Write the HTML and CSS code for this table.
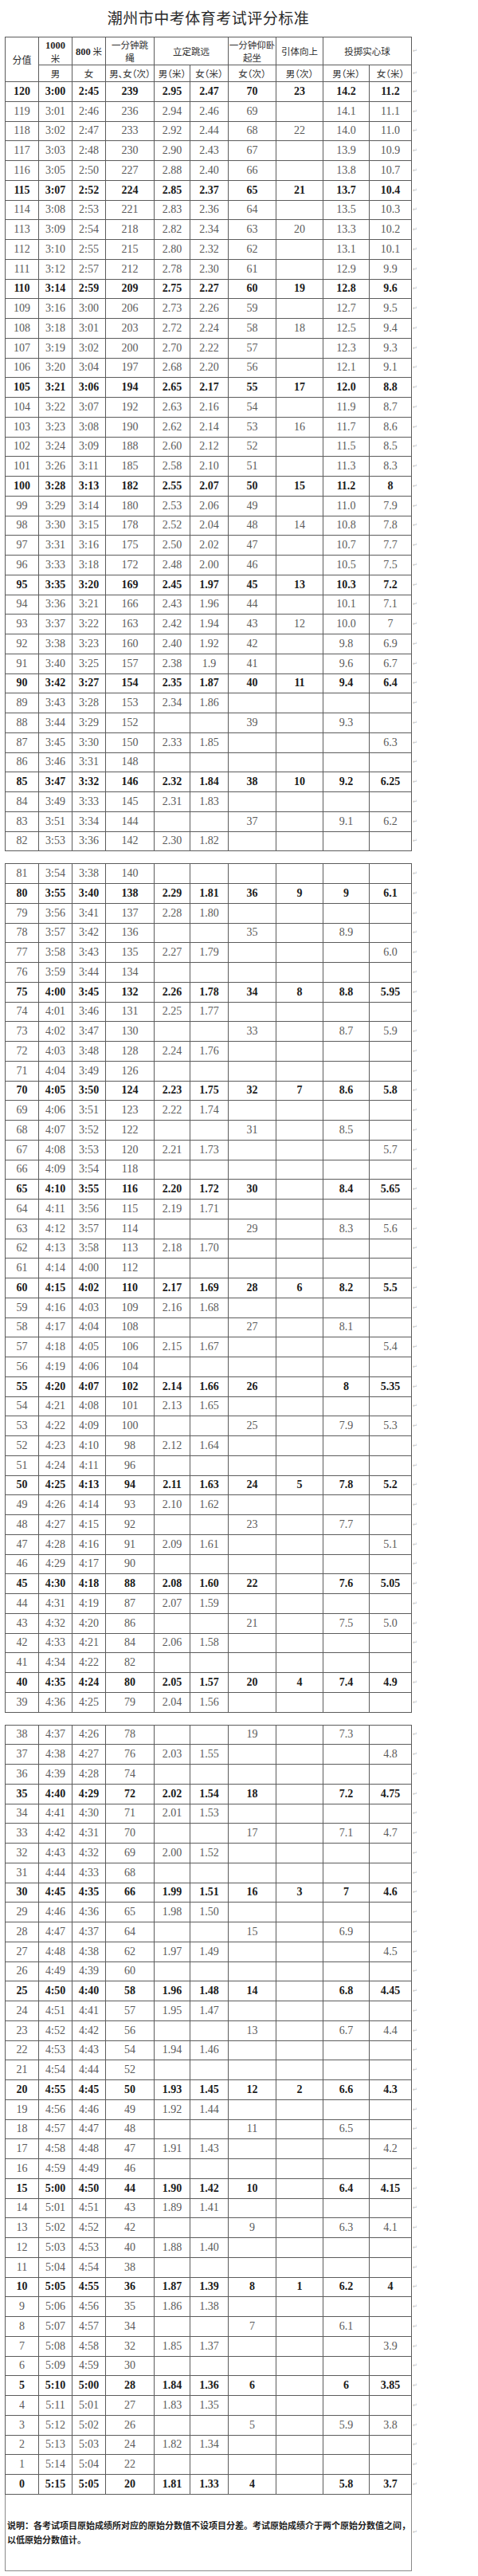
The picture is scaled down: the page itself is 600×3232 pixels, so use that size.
FILE: index.html
```html
<!DOCTYPE html>
<html lang="zh">
<head>
<meta charset="utf-8">
<title>潮州市中考体育考试评分标准</title>
<link rel="stylesheet" href="styles.css">
</head>
<body>
<div class="page">
<h1 class="title">潮州市中考体育考试评分标准</h1>
<table class="grid">
<colgroup><col class="c1"><col class="c2"><col class="c3"><col class="c4"><col class="c5"><col class="c6"><col class="c7"><col class="c8"><col class="c9"><col class="c10"><col class="c11"></colgroup>
<thead>
<tr class="h1"><th rowspan="2" class="fz">分值</th><th><span class="n">1000</span><br>米</th><th><span class="n">800</span> 米</th><th>一分钟跳<br>绳</th><th colspan="2">立定跳远</th><th>一分钟仰卧<br>起坐</th><th>引体向上</th><th colspan="2">投掷实心球</th></tr>
<tr class="h2"><th>男</th><th>女</th><th>男、女（次）</th><th>男（米）</th><th>女（米）</th><th>女（次）</th><th>男（次）</th><th>男（米）</th><th>女（米）</th></tr>
</thead>
<tbody>
<tr class=b><td>120<td>3:00<td>2:45<td>239<td>2.95<td>2.47<td>70<td>23<td>14.2<td>11.2
<tr><td>119<td>3:01<td>2:46<td>236<td>2.94<td>2.46<td>69<td><td>14.1<td>11.1
<tr><td>118<td>3:02<td>2:47<td>233<td>2.92<td>2.44<td>68<td>22<td>14.0<td>11.0
<tr><td>117<td>3:03<td>2:48<td>230<td>2.90<td>2.43<td>67<td><td>13.9<td>10.9
<tr><td>116<td>3:05<td>2:50<td>227<td>2.88<td>2.40<td>66<td><td>13.8<td>10.7
<tr class=b><td>115<td>3:07<td>2:52<td>224<td>2.85<td>2.37<td>65<td>21<td>13.7<td>10.4
<tr><td>114<td>3:08<td>2:53<td>221<td>2.83<td>2.36<td>64<td><td>13.5<td>10.3
<tr><td>113<td>3:09<td>2:54<td>218<td>2.82<td>2.34<td>63<td>20<td>13.3<td>10.2
<tr><td>112<td>3:10<td>2:55<td>215<td>2.80<td>2.32<td>62<td><td>13.1<td>10.1
<tr><td>111<td>3:12<td>2:57<td>212<td>2.78<td>2.30<td>61<td><td>12.9<td>9.9
<tr class=b><td>110<td>3:14<td>2:59<td>209<td>2.75<td>2.27<td>60<td>19<td>12.8<td>9.6
<tr><td>109<td>3:16<td>3:00<td>206<td>2.73<td>2.26<td>59<td><td>12.7<td>9.5
<tr><td>108<td>3:18<td>3:01<td>203<td>2.72<td>2.24<td>58<td>18<td>12.5<td>9.4
<tr><td>107<td>3:19<td>3:02<td>200<td>2.70<td>2.22<td>57<td><td>12.3<td>9.3
<tr><td>106<td>3:20<td>3:04<td>197<td>2.68<td>2.20<td>56<td><td>12.1<td>9.1
<tr class=b><td>105<td>3:21<td>3:06<td>194<td>2.65<td>2.17<td>55<td>17<td>12.0<td>8.8
<tr><td>104<td>3:22<td>3:07<td>192<td>2.63<td>2.16<td>54<td><td>11.9<td>8.7
<tr><td>103<td>3:23<td>3:08<td>190<td>2.62<td>2.14<td>53<td>16<td>11.7<td>8.6
<tr><td>102<td>3:24<td>3:09<td>188<td>2.60<td>2.12<td>52<td><td>11.5<td>8.5
<tr><td>101<td>3:26<td>3:11<td>185<td>2.58<td>2.10<td>51<td><td>11.3<td>8.3
<tr class=b><td>100<td>3:28<td>3:13<td>182<td>2.55<td>2.07<td>50<td>15<td>11.2<td>8
<tr><td>99<td>3:29<td>3:14<td>180<td>2.53<td>2.06<td>49<td><td>11.0<td>7.9
<tr><td>98<td>3:30<td>3:15<td>178<td>2.52<td>2.04<td>48<td>14<td>10.8<td>7.8
<tr><td>97<td>3:31<td>3:16<td>175<td>2.50<td>2.02<td>47<td><td>10.7<td>7.7
<tr><td>96<td>3:33<td>3:18<td>172<td>2.48<td>2.00<td>46<td><td>10.5<td>7.5
<tr class=b><td>95<td>3:35<td>3:20<td>169<td>2.45<td>1.97<td>45<td>13<td>10.3<td>7.2
<tr><td>94<td>3:36<td>3:21<td>166<td>2.43<td>1.96<td>44<td><td>10.1<td>7.1
<tr><td>93<td>3:37<td>3:22<td>163<td>2.42<td>1.94<td>43<td>12<td>10.0<td>7
<tr><td>92<td>3:38<td>3:23<td>160<td>2.40<td>1.92<td>42<td><td>9.8<td>6.9
<tr><td>91<td>3:40<td>3:25<td>157<td>2.38<td>1.9<td>41<td><td>9.6<td>6.7
<tr class=b><td>90<td>3:42<td>3:27<td>154<td>2.35<td>1.87<td>40<td>11<td>9.4<td>6.4
<tr><td>89<td>3:43<td>3:28<td>153<td>2.34<td>1.86<td><td><td><td>
<tr><td>88<td>3:44<td>3:29<td>152<td><td><td>39<td><td>9.3<td>
<tr><td>87<td>3:45<td>3:30<td>150<td>2.33<td>1.85<td><td><td><td>6.3
<tr><td>86<td>3:46<td>3:31<td>148<td><td><td><td><td><td>
<tr class=b><td>85<td>3:47<td>3:32<td>146<td>2.32<td>1.84<td>38<td>10<td>9.2<td>6.25
<tr><td>84<td>3:49<td>3:33<td>145<td>2.31<td>1.83<td><td><td><td>
<tr><td>83<td>3:51<td>3:34<td>144<td><td><td>37<td><td>9.1<td>6.2
<tr><td>82<td>3:53<td>3:36<td>142<td>2.30<td>1.82<td><td><td><td>
</tbody>
</table>

<table class="grid gap">
<colgroup><col class="c1"><col class="c2"><col class="c3"><col class="c4"><col class="c5"><col class="c6"><col class="c7"><col class="c8"><col class="c9"><col class="c10"><col class="c11"></colgroup>
<tbody>
<tr><td>81<td>3:54<td>3:38<td>140<td><td><td><td><td><td>
<tr class=b><td>80<td>3:55<td>3:40<td>138<td>2.29<td>1.81<td>36<td>9<td>9<td>6.1
<tr><td>79<td>3:56<td>3:41<td>137<td>2.28<td>1.80<td><td><td><td>
<tr><td>78<td>3:57<td>3:42<td>136<td><td><td>35<td><td>8.9<td>
<tr><td>77<td>3:58<td>3:43<td>135<td>2.27<td>1.79<td><td><td><td>6.0
<tr><td>76<td>3:59<td>3:44<td>134<td><td><td><td><td><td>
<tr class=b><td>75<td>4:00<td>3:45<td>132<td>2.26<td>1.78<td>34<td>8<td>8.8<td>5.95
<tr><td>74<td>4:01<td>3:46<td>131<td>2.25<td>1.77<td><td><td><td>
<tr><td>73<td>4:02<td>3:47<td>130<td><td><td>33<td><td>8.7<td>5.9
<tr><td>72<td>4:03<td>3:48<td>128<td>2.24<td>1.76<td><td><td><td>
<tr><td>71<td>4:04<td>3:49<td>126<td><td><td><td><td><td>
<tr class=b><td>70<td>4:05<td>3:50<td>124<td>2.23<td>1.75<td>32<td>7<td>8.6<td>5.8
<tr><td>69<td>4:06<td>3:51<td>123<td>2.22<td>1.74<td><td><td><td>
<tr><td>68<td>4:07<td>3:52<td>122<td><td><td>31<td><td>8.5<td>
<tr><td>67<td>4:08<td>3:53<td>120<td>2.21<td>1.73<td><td><td><td>5.7
<tr><td>66<td>4:09<td>3:54<td>118<td><td><td><td><td><td>
<tr class=b><td>65<td>4:10<td>3:55<td>116<td>2.20<td>1.72<td>30<td><td>8.4<td>5.65
<tr><td>64<td>4:11<td>3:56<td>115<td>2.19<td>1.71<td><td><td><td>
<tr><td>63<td>4:12<td>3:57<td>114<td><td><td>29<td><td>8.3<td>5.6
<tr><td>62<td>4:13<td>3:58<td>113<td>2.18<td>1.70<td><td><td><td>
<tr><td>61<td>4:14<td>4:00<td>112<td><td><td><td><td><td>
<tr class=b><td>60<td>4:15<td>4:02<td>110<td>2.17<td>1.69<td>28<td>6<td>8.2<td>5.5
<tr><td>59<td>4:16<td>4:03<td>109<td>2.16<td>1.68<td><td><td><td>
<tr><td>58<td>4:17<td>4:04<td>108<td><td><td>27<td><td>8.1<td>
<tr><td>57<td>4:18<td>4:05<td>106<td>2.15<td>1.67<td><td><td><td>5.4
<tr><td>56<td>4:19<td>4:06<td>104<td><td><td><td><td><td>
<tr class=b><td>55<td>4:20<td>4:07<td>102<td>2.14<td>1.66<td>26<td><td>8<td>5.35
<tr><td>54<td>4:21<td>4:08<td>101<td>2.13<td>1.65<td><td><td><td>
<tr><td>53<td>4:22<td>4:09<td>100<td><td><td>25<td><td>7.9<td>5.3
<tr><td>52<td>4:23<td>4:10<td>98<td>2.12<td>1.64<td><td><td><td>
<tr><td>51<td>4:24<td>4:11<td>96<td><td><td><td><td><td>
<tr class=b><td>50<td>4:25<td>4:13<td>94<td>2.11<td>1.63<td>24<td>5<td>7.8<td>5.2
<tr><td>49<td>4:26<td>4:14<td>93<td>2.10<td>1.62<td><td><td><td>
<tr><td>48<td>4:27<td>4:15<td>92<td><td><td>23<td><td>7.7<td>
<tr><td>47<td>4:28<td>4:16<td>91<td>2.09<td>1.61<td><td><td><td>5.1
<tr><td>46<td>4:29<td>4:17<td>90<td><td><td><td><td><td>
<tr class=b><td>45<td>4:30<td>4:18<td>88<td>2.08<td>1.60<td>22<td><td>7.6<td>5.05
<tr><td>44<td>4:31<td>4:19<td>87<td>2.07<td>1.59<td><td><td><td>
<tr><td>43<td>4:32<td>4:20<td>86<td><td><td>21<td><td>7.5<td>5.0
<tr><td>42<td>4:33<td>4:21<td>84<td>2.06<td>1.58<td><td><td><td>
<tr><td>41<td>4:34<td>4:22<td>82<td><td><td><td><td><td>
<tr class=b><td>40<td>4:35<td>4:24<td>80<td>2.05<td>1.57<td>20<td>4<td>7.4<td>4.9
<tr><td>39<td>4:36<td>4:25<td>79<td>2.04<td>1.56<td><td><td><td>
</tbody>
</table>

<table class="grid gap">
<colgroup><col class="c1"><col class="c2"><col class="c3"><col class="c4"><col class="c5"><col class="c6"><col class="c7"><col class="c8"><col class="c9"><col class="c10"><col class="c11"></colgroup>
<tbody>
<tr><td>38<td>4:37<td>4:26<td>78<td><td><td>19<td><td>7.3<td>
<tr><td>37<td>4:38<td>4:27<td>76<td>2.03<td>1.55<td><td><td><td>4.8
<tr><td>36<td>4:39<td>4:28<td>74<td><td><td><td><td><td>
<tr class=b><td>35<td>4:40<td>4:29<td>72<td>2.02<td>1.54<td>18<td><td>7.2<td>4.75
<tr><td>34<td>4:41<td>4:30<td>71<td>2.01<td>1.53<td><td><td><td>
<tr><td>33<td>4:42<td>4:31<td>70<td><td><td>17<td><td>7.1<td>4.7
<tr><td>32<td>4:43<td>4:32<td>69<td>2.00<td>1.52<td><td><td><td>
<tr><td>31<td>4:44<td>4:33<td>68<td><td><td><td><td><td>
<tr class=b><td>30<td>4:45<td>4:35<td>66<td>1.99<td>1.51<td>16<td>3<td>7<td>4.6
<tr><td>29<td>4:46<td>4:36<td>65<td>1.98<td>1.50<td><td><td><td>
<tr><td>28<td>4:47<td>4:37<td>64<td><td><td>15<td><td>6.9<td>
<tr><td>27<td>4:48<td>4:38<td>62<td>1.97<td>1.49<td><td><td><td>4.5
<tr><td>26<td>4:49<td>4:39<td>60<td><td><td><td><td><td>
<tr class=b><td>25<td>4:50<td>4:40<td>58<td>1.96<td>1.48<td>14<td><td>6.8<td>4.45
<tr><td>24<td>4:51<td>4:41<td>57<td>1.95<td>1.47<td><td><td><td>
<tr><td>23<td>4:52<td>4:42<td>56<td><td><td>13<td><td>6.7<td>4.4
<tr><td>22<td>4:53<td>4:43<td>54<td>1.94<td>1.46<td><td><td><td>
<tr><td>21<td>4:54<td>4:44<td>52<td><td><td><td><td><td>
<tr class=b><td>20<td>4:55<td>4:45<td>50<td>1.93<td>1.45<td>12<td>2<td>6.6<td>4.3
<tr><td>19<td>4:56<td>4:46<td>49<td>1.92<td>1.44<td><td><td><td>
<tr><td>18<td>4:57<td>4:47<td>48<td><td><td>11<td><td>6.5<td>
<tr><td>17<td>4:58<td>4:48<td>47<td>1.91<td>1.43<td><td><td><td>4.2
<tr><td>16<td>4:59<td>4:49<td>46<td><td><td><td><td><td>
<tr class=b><td>15<td>5:00<td>4:50<td>44<td>1.90<td>1.42<td>10<td><td>6.4<td>4.15
<tr><td>14<td>5:01<td>4:51<td>43<td>1.89<td>1.41<td><td><td><td>
<tr><td>13<td>5:02<td>4:52<td>42<td><td><td>9<td><td>6.3<td>4.1
<tr><td>12<td>5:03<td>4:53<td>40<td>1.88<td>1.40<td><td><td><td>
<tr><td>11<td>5:04<td>4:54<td>38<td><td><td><td><td><td>
<tr class=b><td>10<td>5:05<td>4:55<td>36<td>1.87<td>1.39<td>8<td>1<td>6.2<td>4
<tr><td>9<td>5:06<td>4:56<td>35<td>1.86<td>1.38<td><td><td><td>
<tr><td>8<td>5:07<td>4:57<td>34<td><td><td>7<td><td>6.1<td>
<tr><td>7<td>5:08<td>4:58<td>32<td>1.85<td>1.37<td><td><td><td>3.9
<tr><td>6<td>5:09<td>4:59<td>30<td><td><td><td><td><td>
<tr class=b><td>5<td>5:10<td>5:00<td>28<td>1.84<td>1.36<td>6<td><td>6<td>3.85
<tr><td>4<td>5:11<td>5:01<td>27<td>1.83<td>1.35<td><td><td><td>
<tr><td>3<td>5:12<td>5:02<td>26<td><td><td>5<td><td>5.9<td>3.8
<tr><td>2<td>5:13<td>5:03<td>24<td>1.82<td>1.34<td><td><td><td>
<tr><td>1<td>5:14<td>5:04<td>22<td><td><td><td><td><td>
<tr class=b><td>0<td>5:15<td>5:05<td>20<td>1.81<td>1.33<td>4<td><td>5.8<td>3.7
<tr class=nr><td colspan="10" class="note">说明：各考试项目原始成绩所对应的原始分数值不设项目分差。考试原始成绩介于两个原始分数值之间，以低原始分数值计。
</tbody>
</table>
</div>
</body>
</html>
```

FILE: styles.css
```css
* {
  box-sizing: border-box;
}

body {
  margin: 0;
  background: #fff;
  font-family: "Liberation Serif", "Noto Sans CJK SC", serif;
  color: #5a5a5a;
}

.page {
  padding-left: 6px;
  width: 540px;
}

.title {
  width: 511px;
  height: 46px;
  margin: 0;
  padding-top: 8px;
  text-align: center;
  font-family: "Noto Sans CJK SC", sans-serif;
  font-size: 19px;
  font-weight: 400;
  letter-spacing: 0.5px;
  line-height: 28px;
  color: #2a2a2a;
}

.grid {
  border-collapse: collapse;
  table-layout: fixed;
  width: 522px;
}

.gap {
  margin-top: 15px;
}

.c1, .c2, .c3 { width: 42px; }
.c4 { width: 61px; }
.c5 { width: 45px; }
.c6 { width: 48px; }
.c7 { width: 60px; }
.c8 { width: 59px; }
.c9 { width: 58px; }
.c10 { width: 53px; }
.c11 { width: 12px; }

.grid td,
.grid th {
  border: 1px solid #5c5c5c;
  padding: 0;
  height: 24.75px;
  text-align: center;
  vertical-align: middle;
  font-size: 14px;
  line-height: 16px;
  white-space: nowrap;
  overflow: hidden;
}

.grid tr::after {
  content: "\21B5";
  display: table-cell;
  border: 0;
  padding-left: 1px;
  font-family: "DejaVu Sans", sans-serif;
  font-size: 7px;
  color: #bdbdbd;
  vertical-align: middle;
  text-align: left;
}

.grid tr.b td {
  font-weight: bold;
  color: #1c1c1c;
}

.grid th {
  font-family: "Noto Sans CJK SC", sans-serif;
  font-size: 11.5px;
  font-weight: 400;
  color: #2e2e2e;
  line-height: 16px;
  font-feature-settings: "halt";
}

.grid .h1 th {
  height: 35px;
}

.grid .h2 th {
  height: 21px;
}

.grid th.fz {
  height: 56px;
  font-size: 12px;
}

.n {
  font-family: "Liberation Serif", serif;
  font-size: 12.5px;
  font-weight: bold;
  color: #2a2a2a;
}

.grid td.note {
  height: 96px;
  padding: 0 0 0 2px;
  text-align: left;
  white-space: normal;
  font-family: "Noto Sans CJK SC", sans-serif;
  font-size: 11px;
  font-weight: bold;
  line-height: 18px;
  color: #222;
  border-color: #8a8a8a;
}
```
